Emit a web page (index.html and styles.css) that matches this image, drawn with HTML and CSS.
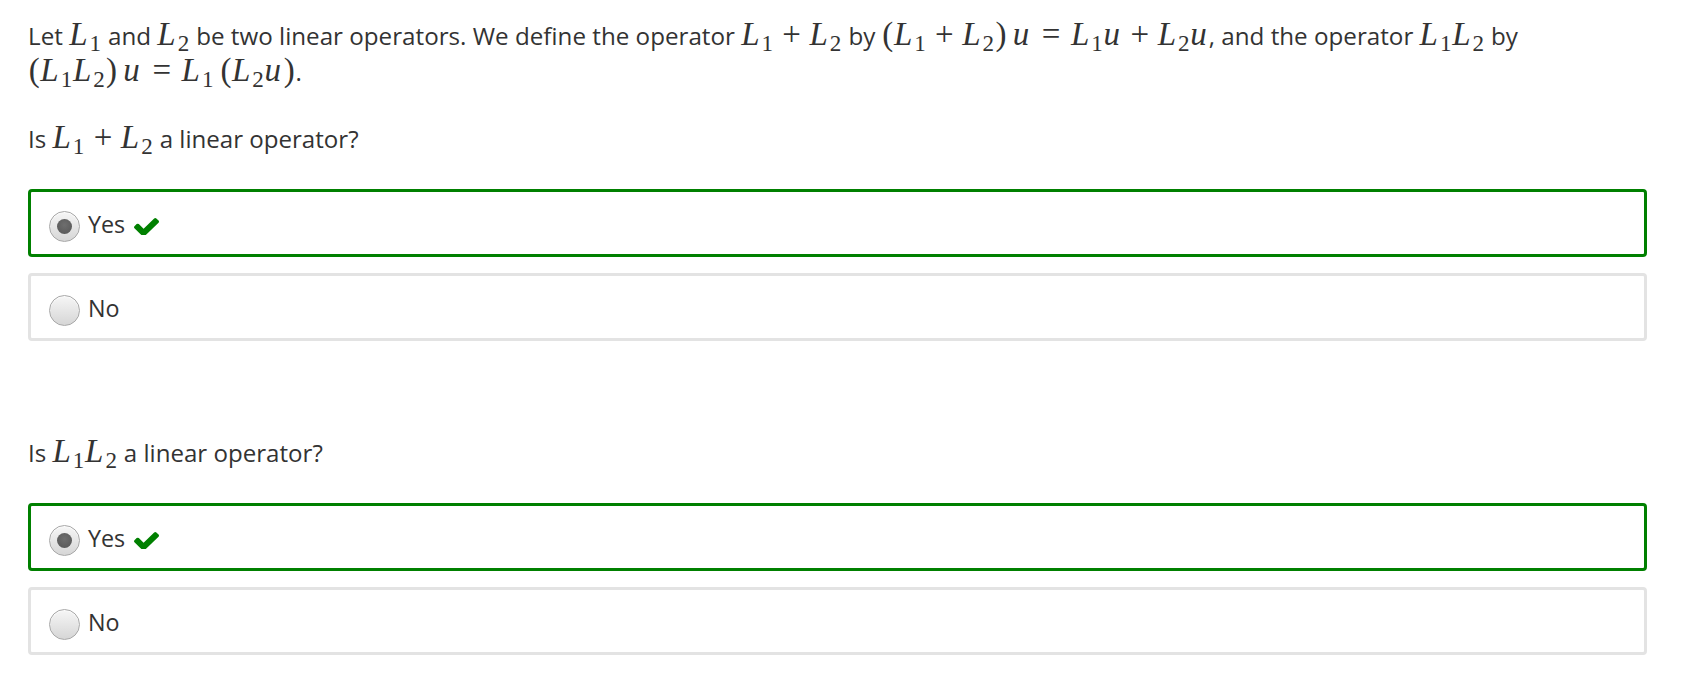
FILE: index.html
```html
<!DOCTYPE html>
<html>
<head>
<meta charset="utf-8">
<link rel="stylesheet" href="styles.css">
</head>
<body>
<div class="page">
  <p class="intro">Let <span class="m"><i>L</i><span class="sb">1</span></span> and <span class="m"><i>L</i><span class="sb">2</span></span> be two linear operators. We define the operator <span class="m"><i>L</i><span class="sb">1</span><span class="op">+</span><i>L</i><span class="sb">2</span></span> by <span class="m"><span class="pa">(</span><i>L</i><span class="sb">1</span><span class="op">+</span><i>L</i><span class="sb">2</span><span class="pa">)</span><span class="th"></span><i class="u">u</i><span class="rel">=</span><i>L</i><span class="sb">1</span><i class="u">u</i><span class="op">+</span><i>L</i><span class="sb">2</span><i class="u">u</i></span>, and the operator <span class="m"><i>L</i><span class="sb">1</span><i>L</i><span class="sb">2</span></span> by <span class="m"><span class="pa">(</span><i>L</i><span class="sb">1</span><i>L</i><span class="sb">2</span><span class="pa">)</span><span class="th"></span><i class="u">u</i><span class="rel">=</span><i>L</i><span class="sb">1</span><span class="th"></span><span class="pa">(</span><i>L</i><span class="sb">2</span><i class="u">u</i><span class="pa">)</span></span>.</p>

  <section class="question">
    <p class="qtext">Is <span class="m"><i>L</i><span class="sb">1</span><span class="op">+</span><i>L</i><span class="sb">2</span></span> a linear operator?</p>
    <div class="choices">
      <div class="choice correct">
        <span class="radio on"></span>
        <span class="label">Yes</span>
        <svg class="check" viewBox="121 266 1550 1160" preserveAspectRatio="none" width="25" height="18"><path d="M1671 566q0 40-28 68l-724 724-136 136q-28 28-68 28t-68-28l-136-136-362-362q-28-28-28-68t28-68l136-136q28-28 68-28t68 28l294 295 656-657q28-28 68-28t68 28l136 136q28 28 28 68z"/></svg>
      </div>
      <div class="choice">
        <span class="radio"></span>
        <span class="label">No</span>
      </div>
    </div>
  </section>

  <section class="question second">
    <p class="qtext">Is <span class="m"><i>L</i><span class="sb">1</span><i>L</i><span class="sb">2</span></span> a linear operator?</p>
    <div class="choices">
      <div class="choice correct">
        <span class="radio on"></span>
        <span class="label">Yes</span>
        <svg class="check" viewBox="121 266 1550 1160" preserveAspectRatio="none" width="25" height="18"><path d="M1671 566q0 40-28 68l-724 724-136 136q-28 28-68 28t-68-28l-136-136-362-362q-28-28-28-68t28-68l136-136q28-28 68-28t68 28l294 295 656-657q28-28 68-28t68 28l136 136q28 28 28 68z"/></svg>
      </div>
      <div class="choice">
        <span class="radio"></span>
        <span class="label">No</span>
      </div>
    </div>
  </section>
</div>
</body>
</html>
```

FILE: styles.css
```css
html, body {
  margin: 0;
  padding: 0;
  background: #ffffff;
}

body {
  font-family: "Open Sans", "Liberation Sans", sans-serif;
  color: #333333;
}

.page {
  width: 1619px;
  padding: 18px 0 0 28px;
}

.intro {
  margin: 0;
  font-size: 24.2px;
  line-height: 36px;
}

.m {
  font-family: "Liberation Serif", "DejaVu Serif", serif;
  font-size: 33px;
  line-height: 0.9;
  white-space: nowrap;
}

.m i {
  font-style: italic;
  padding-right: 0.06em;
}

.sb {
  font-size: 0.7em;
  line-height: 0;
  vertical-align: -0.25em;
  font-style: normal;
  padding-right: 0.03em;
}

.op {
  padding: 0 0.26em;
}

.rel {
  padding: 0 0.32em;
}

.pa {
  padding: 0 0.02em;
}

.th {
  display: inline-block;
  width: 0.17em;
}

.question {
  margin-top: 31px;
}

.question.second {
  margin-top: 94px;
}

.qtext {
  margin: 0;
  font-size: 24.1px;
  line-height: 36px;
}

.choices {
  margin-top: 32px;
  display: flex;
  flex-direction: column;
  gap: 16px;
}

.choice {
  box-sizing: content-box;
  height: 56px;
  border: 3px solid #e3e3e3;
  border-radius: 4px;
  display: flex;
  align-items: center;
  padding: 6px 18px 0 18px;
}

.choice.correct {
  border-color: #008000;
}

.radio {
  width: 29px;
  height: 29px;
  border: 1px solid #a8a8a8;
  border-radius: 50%;
  background: linear-gradient(#f6f6f6, #d6d6d6);
  box-shadow: inset 0 1px 1px rgba(255,255,255,0.8);
  display: flex;
  align-items: center;
  justify-content: center;
  flex: none;
}

.radio.on::after {
  content: "";
  width: 15px;
  height: 15px;
  border-radius: 50%;
  background: radial-gradient(circle at 50% 40%, #6e6e6e, #555555);
}

.label {
  margin-left: 8px;
  margin-bottom: 4px;
  font-size: 23.3px;
}

.check {
  margin-left: 9px;
  fill: #008000;
  flex: none;
}
```
